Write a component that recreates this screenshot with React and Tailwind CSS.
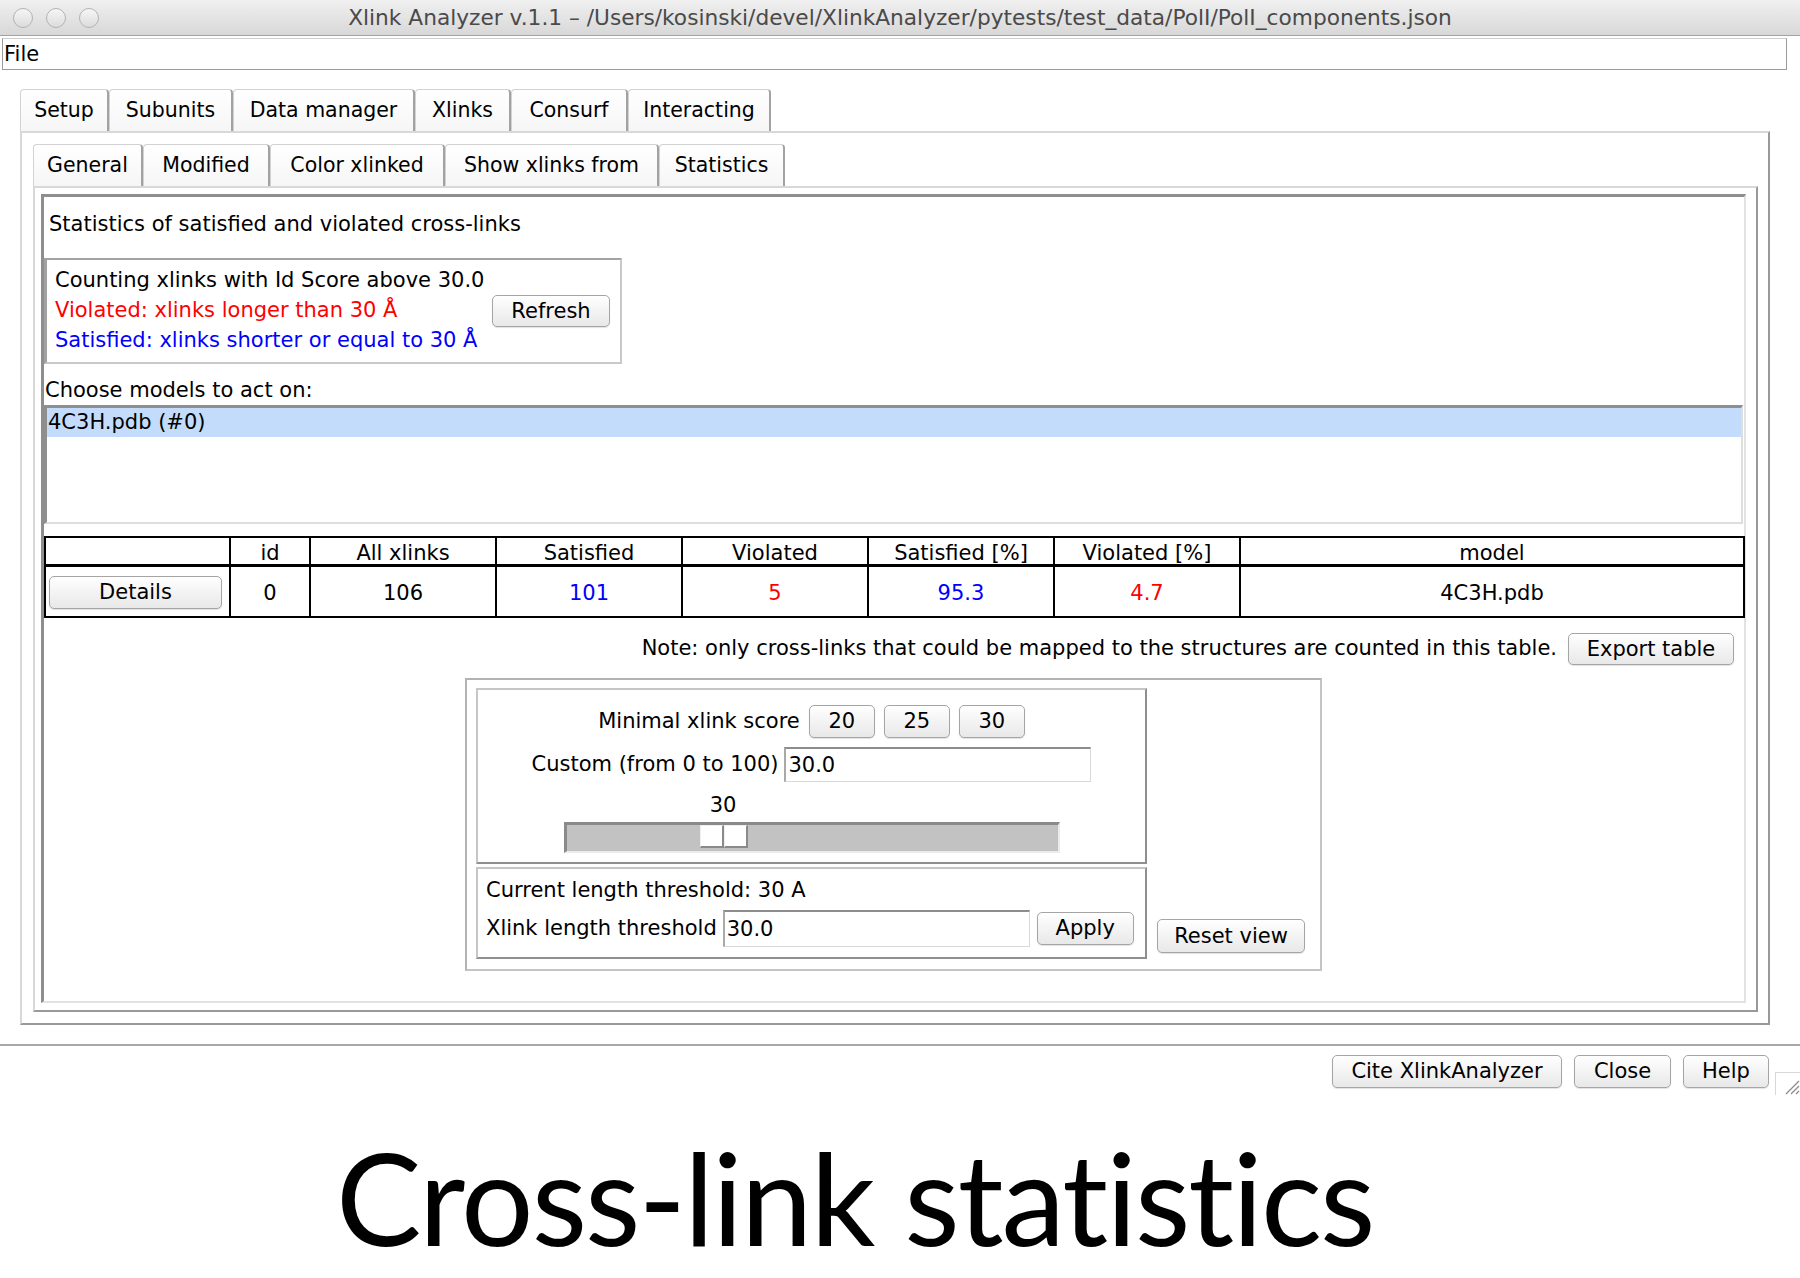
import React from "react";

function Btn({ className = "", children }) {
  return (
    <div
      className={
        "flex items-center justify-center rounded-[5px] border border-[#a5a5a5] bg-linear-to-b from-white to-[#e8e8e8] shadow-[0_1px_1px_rgba(0,0,0,0.12)] text-black leading-none whitespace-nowrap " +
        className
      }
    >
      {children}
    </div>
  );
}

function Field({ className = "", value }) {
  return (
    <div
      className={
        "flex items-center bg-white border-t-2 border-l-2 border-t-[#8d8d8d] border-l-[#a9a9a9] border-r border-b border-r-[#d9d9d9] border-b-[#d9d9d9] pl-[2px] leading-none " +
        className
      }
    >
      {value}
    </div>
  );
}

function Tab({ className = "", label }) {
  return (
    <div
      className={
        "h-[42px] flex items-center justify-center border-l border-t border-[#d2d2d2] border-r-2 border-r-[#a2a2a2] rounded-t-[4px] bg-linear-to-b from-white to-[#f6f6f6] whitespace-nowrap text-[20.5px] " +
        className
      }
    >
      {label}
    </div>
  );
}

export default function App() {
  return (
    <div className="w-[1800px] h-[1278px] bg-white overflow-hidden font-['DejaVu_Sans',sans-serif] text-[21px] text-black">
      {/* Title bar */}
      <div className="h-[36px] flex items-center border-b border-[#a3a3a3] bg-linear-to-b from-[#f0f0f0] to-[#d8d8d8]">
        <div className="w-[110px] flex items-center gap-[13px] pl-[13px]">
          <div className="w-[20px] h-[20px] rounded-full border border-[#b3b3b3] bg-linear-to-b from-[#f6f6f6] to-[#dcdcdc]" />
          <div className="w-[20px] h-[20px] rounded-full border border-[#b3b3b3] bg-linear-to-b from-[#f6f6f6] to-[#dcdcdc]" />
          <div className="w-[20px] h-[20px] rounded-full border border-[#b3b3b3] bg-linear-to-b from-[#f6f6f6] to-[#dcdcdc]" />
        </div>
        <div className="flex-1 text-center text-[#4a4a4a] text-[21.7px] whitespace-nowrap leading-none">
          Xlink Analyzer v.1.1 – /Users/kosinski/devel/XlinkAnalyzer/pytests/test_data/PolI/PolI_components.json
        </div>
        <div className="w-[110px]" />
      </div>

      {/* Menu bar */}
      <div className="mt-[2px] ml-[2px] w-[1785px] h-[32px] border border-[#9a9a9a] border-t-[#cfcfcf] flex items-center pl-[1px] leading-none">
        File
      </div>

      {/* Main tab area */}
      <div className="ml-[20px] mt-[19px] w-[1750px]">
        <div className="flex">
          <Tab className="w-[89px]" label="Setup" />
          <Tab className="w-[124px]" label="Subunits" />
          <Tab className="w-[182px]" label="Data manager" />
          <Tab className="w-[96px]" label="Xlinks" />
          <Tab className="w-[117px]" label="Consurf" />
          <Tab className="w-[143px]" label="Interacting" />
        </div>
        <div className="h-[894px] border-2 border-[#d8d8d8] border-r-[#999999] border-b-[#999999] pt-[11px] pl-[11px]">
          <div className="flex">
            <Tab className="w-[110px]" label="General" />
            <Tab className="w-[127px]" label="Modified" />
            <Tab className="w-[175px]" label="Color xlinked" />
            <Tab className="w-[214px]" label="Show xlinks from" />
            <Tab className="w-[126px]" label="Statistics" />
          </div>
          <div className="w-[1725px] h-[826px] border-2 border-[#d8d8d8] border-r-[#999999] border-b-[#999999] pt-[6px] pl-[6px]">
            {/* Content box */}
            <div className="w-[1705px] h-[809px] border-t-[3px] border-l-[3px] border-[#8e8e8e] border-r-2 border-b-2 border-r-[#e2e2e2] border-b-[#e2e2e2]">
              <div className="h-[61px] pt-[15px] pl-[5px] leading-[24px] whitespace-nowrap">
                Statistics of satisfied and violated cross-links
              </div>

              <div className="w-[578px] h-[106px] border-t-2 border-l-[3px] border-[#a2a2a2] border-r-2 border-b-2 border-r-[#c9c9c9] border-b-[#c9c9c9] flex items-center justify-between">
                <div className="pl-[8px] flex flex-col">
                  <div className="h-[30px] flex items-center whitespace-nowrap">Counting xlinks with Id Score above 30.0</div>
                  <div className="h-[30px] flex items-center whitespace-nowrap text-[#ff0000]">Violated: xlinks longer than 30 Å</div>
                  <div className="h-[30px] flex items-center whitespace-nowrap text-[#0000ff]">Satisfied: xlinks shorter or equal to 30 Å</div>
                </div>
                <Btn className="w-[118px] h-[32px] mr-[10px]">Refresh</Btn>
              </div>

              <div className="h-[41px] pt-[11px] pl-[1px] leading-[30px] whitespace-nowrap">
                Choose models to act on:
              </div>

              <div className="w-[1699px] h-[119px] border-t-[3px] border-l-[3px] border-[#8f8f8f] border-r-2 border-b-2 border-r-[#dedede] border-b-[#dedede]">
                <div className="h-[29px] bg-[#c4dcfb] flex items-center pl-[1px]">4C3H.pdb (#0)</div>
              </div>

              {/* Table */}
              <div className="mt-[12px] w-[1701px] h-[82px] border-2 border-black">
                <div className="h-[29px] border-b-[3px] border-black grid grid-cols-[185px_80px_186px_186px_186px_186px_186px_502px]">
                  <div className="border-r-2 border-black" />
                  <div className="border-r-2 border-black flex items-center justify-center">id</div>
                  <div className="border-r-2 border-black flex items-center justify-center">All xlinks</div>
                  <div className="border-r-2 border-black flex items-center justify-center">Satisfied</div>
                  <div className="border-r-2 border-black flex items-center justify-center">Violated</div>
                  <div className="border-r-2 border-black flex items-center justify-center">Satisfied [%]</div>
                  <div className="border-r-2 border-black flex items-center justify-center">Violated [%]</div>
                  <div className="flex items-center justify-center">model</div>
                </div>
                <div className="h-[49px] grid grid-cols-[185px_80px_186px_186px_186px_186px_186px_502px]">
                  <div className="border-r-2 border-black pl-[3px] pt-[9px]">
                    <Btn className="w-[173px] h-[33px]">Details</Btn>
                  </div>
                  <div className="border-r-2 border-black flex items-center justify-center pt-[5px]">0</div>
                  <div className="border-r-2 border-black flex items-center justify-center pt-[5px]">106</div>
                  <div className="border-r-2 border-black flex items-center justify-center pt-[5px] text-[#0000ff]">101</div>
                  <div className="border-r-2 border-black flex items-center justify-center pt-[5px] text-[#ff0000]">5</div>
                  <div className="border-r-2 border-black flex items-center justify-center pt-[5px] text-[#0000ff]">95.3</div>
                  <div className="border-r-2 border-black flex items-center justify-center pt-[5px] text-[#ff0000]">4.7</div>
                  <div className="flex items-center justify-center pt-[5px]">4C3H.pdb</div>
                </div>
              </div>

              {/* Note row */}
              <div className="mt-[15px] flex items-center justify-end pr-[10px]">
                <div className="whitespace-nowrap mr-[11px]">
                  Note: only cross-links that could be mapped to the structures are counted in this table.
                </div>
                <Btn className="w-[166px] h-[32px]">Export table</Btn>
              </div>

              {/* Lower box */}
              <div className="mt-[13px] ml-[421px] w-[857px] h-[293px] border-2 border-[#c4c4c4] border-t-[#b2b2b2] border-l-[#b2b2b2] flex pt-[8px] pl-[9px]">
                <div className="flex flex-col">
                  <div className="w-[671px] h-[176px] border-2 border-[#c6c6c6] border-r-[#8f8f8f] border-b-[#8f8f8f] flex flex-col items-center">
                    <div className="mt-[15px] h-[33px] flex items-center">
                      <div className="whitespace-nowrap">Minimal xlink score</div>
                      <Btn className="ml-[9px] w-[66px] h-[33px]">20</Btn>
                      <Btn className="ml-[9px] w-[66px] h-[33px]">25</Btn>
                      <Btn className="ml-[9px] w-[66px] h-[33px]">30</Btn>
                    </div>
                    <div className="mt-[9px] flex items-center">
                      <div className="whitespace-nowrap">Custom (from 0 to 100)</div>
                      <Field className="ml-[6px] w-[307px] h-[35px]" value="30.0" />
                    </div>
                    <div className="mt-[11px] w-[496px]">
                      <div className="h-[24px] flex items-center">
                        <div className="ml-[136px] w-[47px] text-center leading-none">30</div>
                      </div>
                      <div className="mt-[5px] h-[31px] bg-[#c2c2c2] border-t-[3px] border-l-[3px] border-[#8a8a8a] border-r-2 border-b-2 border-r-[#ebebeb] border-b-[#ebebeb] flex items-start">
                        <div className="ml-[133px] flex h-[23px]">
                          <div className="w-[24px] h-[23px] bg-white border-t border-l border-[#f0f0f0] border-r-2 border-b-2 border-r-[#8a8a8a] border-b-[#8a8a8a]" />
                          <div className="w-[24px] h-[23px] bg-white border-t border-l border-[#f0f0f0] border-r-2 border-b-2 border-r-[#8a8a8a] border-b-[#8a8a8a]" />
                        </div>
                      </div>
                    </div>
                  </div>
                  <div className="mt-[3px] w-[671px] h-[92px] border-2 border-[#c6c6c6] border-r-[#8f8f8f] border-b-[#8f8f8f] pl-[8px] pt-[10px]">
                    <div className="h-[24px] flex items-center whitespace-nowrap">Current length threshold: 30 A</div>
                    <div className="mt-[7px] flex items-center">
                      <div className="whitespace-nowrap">Xlink length threshold</div>
                      <Field className="ml-[6px] w-[307px] h-[37px]" value="30.0" />
                      <Btn className="ml-[7px] w-[97px] h-[33px]">Apply</Btn>
                    </div>
                  </div>
                </div>
                <Btn className="self-end mb-[16px] ml-[10px] w-[148px] h-[34px]">Reset view</Btn>
              </div>
            </div>
          </div>
        </div>
      </div>

      {/* Separator */}
      <div className="mt-[19px] h-[2px] bg-[#a8a8a8]" />

      {/* Bottom buttons */}
      <div className="mt-[9px] flex justify-end items-start">
        <Btn className="w-[230px] h-[33px]">Cite XlinkAnalyzer</Btn>
        <Btn className="ml-[12px] w-[97px] h-[33px]">Close</Btn>
        <Btn className="ml-[12px] w-[86px] h-[33px]">Help</Btn>
        <div className="ml-[6px] mt-[17px] w-[25px] h-[23px] border-l border-t border-[#d8d8d8] flex items-end justify-end">
          <svg width="20" height="18" viewBox="0 0 20 18">
            <line x1="6" y1="17" x2="19" y2="4" stroke="#8a8a8a" strokeWidth="1.2" />
            <line x1="11" y1="17" x2="19" y2="9" stroke="#8a8a8a" strokeWidth="1.2" />
            <line x1="16" y1="17" x2="19" y2="14" stroke="#8a8a8a" strokeWidth="1.2" />
          </svg>
        </div>
      </div>

      {/* Caption */}
      <div className="mt-[38px] pl-[336px] text-[128px] leading-none font-['Lato',sans-serif] tracking-[-2px] [font-variant-ligatures:none] whitespace-nowrap">
        Cross-link statistics
      </div>
    </div>
  );
}
